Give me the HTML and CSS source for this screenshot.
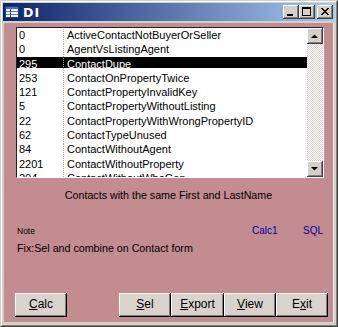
FILE: index.html
```html
<!DOCTYPE html>
<html>
<head>
<meta charset="utf-8">
<link rel="stylesheet" href="styles.css">
</head>
<body>
<div class="window">
  <div class="frame">
    <div class="titlebar">
      <svg class="appicon" width="16" height="14" viewBox="0 0 16 14">
        <rect x="1.5" y="1.5" width="13" height="11" fill="#f4f4ff" stroke="#1c3c8c"/>
        <rect x="2" y="2" width="12" height="2" fill="#4a70c8"/>
        <line x1="6.5" y1="4" x2="6.5" y2="12" stroke="#1c3c8c"/>
        <line x1="2" y1="6.5" x2="14" y2="6.5" stroke="#5a78c0"/>
        <line x1="2" y1="9.5" x2="14" y2="9.5" stroke="#5a78c0"/>
      </svg>
      <span class="title">DI</span>
      <div class="capbtns">
        <div class="capbtn"><svg width="16" height="14" viewBox="0 0 16 14"><rect x="4" y="9" width="6" height="2" fill="#000"/></svg></div>
        <div class="capbtn"><svg width="16" height="14" viewBox="0 0 16 14"><rect x="3.5" y="2.5" width="8" height="8" fill="none" stroke="#000"/><rect x="3" y="2" width="9" height="2" fill="#000"/></svg></div>
        <div class="capbtn close"><svg width="16" height="14" viewBox="0 0 16 14"><path d="M4 3 L11 10 M5 3 L12 10 M11 3 L4 10 M12 3 L5 10" stroke="#000" stroke-width="1"/></svg></div>
      </div>
    </div>
    <div class="client">
      <div class="listbox">
        <div class="rows">
          <div class="row"><span class="c1">0</span><span class="c2">ActiveContactNotBuyerOrSeller</span></div>
          <div class="row"><span class="c1">0</span><span class="c2">AgentVsListingAgent</span></div>
          <div class="row sel"><span class="c1">295</span><span class="c2">ContactDupe</span></div>
          <div class="row"><span class="c1">253</span><span class="c2">ContactOnPropertyTwice</span></div>
          <div class="row"><span class="c1">121</span><span class="c2">ContactPropertyInvalidKey</span></div>
          <div class="row"><span class="c1">5</span><span class="c2">ContactPropertyWithoutListing</span></div>
          <div class="row"><span class="c1">22</span><span class="c2">ContactPropertyWithWrongPropertyID</span></div>
          <div class="row"><span class="c1">62</span><span class="c2">ContactTypeUnused</span></div>
          <div class="row"><span class="c1">84</span><span class="c2">ContactWithoutAgent</span></div>
          <div class="row"><span class="c1">2201</span><span class="c2">ContactWithoutProperty</span></div>
          <div class="row"><span class="c1">204</span><span class="c2">ContactWithoutWhoGen</span></div>
        </div>
        <div class="vscroll">
          <div class="sbtn"><svg width="16" height="16" viewBox="0 0 16 16"><path d="M4 10 L11 10 L7.5 6.5 Z" fill="#000"/></svg></div>
          <div class="track"></div>
          <div class="sbtn"><svg width="16" height="16" viewBox="0 0 16 16"><path d="M4 6 L11 6 L7.5 9.5 Z" fill="#000"/></svg></div>
        </div>
      </div>
      <div class="caption">Contacts with the same First and LastName</div>
      <div class="inforow">
        <span class="note">Note</span>
        <span class="link calc1">Calc1</span>
        <span class="link">SQL</span>
      </div>
      <div class="fix">Fix:Sel and combine on Contact form</div>
      <div class="buttons">
        <div class="btn calc"><span class="u">C</span>alc</div>
        <div class="btn"><span class="u">S</span>el</div>
        <div class="btn wide"><span class="u">E</span>xport</div>
        <div class="btn"><span class="u">V</span>iew</div>
        <div class="btn">E<span class="u">x</span>it</div>
      </div>
    </div>
  </div>
</div>
</body>
</html>
```

FILE: styles.css
```css
html, body {
  margin: 0;
  padding: 0;
  background: #d4d0c8;
}
body {
  font-family: "Liberation Sans", Arial, sans-serif;
}
.window {
  width: 338px;
  height: 327px;
  box-sizing: border-box;
  border: 1px solid;
  border-color: #d4d0c8 #404040 #404040 #d4d0c8;
  background: #d4d0c8;
}
.frame {
  height: 100%;
  box-sizing: border-box;
  border: 1px solid;
  border-color: #ffffff #808080 #808080 #ffffff;
  padding: 1px;
  display: flex;
  flex-direction: column;
}
.titlebar {
  height: 18px;
  flex: none;
  display: flex;
  align-items: center;
  background: linear-gradient(to right, #0a246a, #a6caf0);
  padding-left: 1px;
  padding-right: 2px;
}
.appicon {
  display: block;
  flex: none;
}
.title {
  margin-left: 3px;
  color: #fff;
  font-family: "DejaVu Sans", sans-serif;
  font-weight: bold;
  font-size: 12.5px;
  letter-spacing: 1px;
}
.capbtns {
  margin-left: auto;
  display: flex;
}
.capbtn {
  width: 16px;
  height: 14px;
  box-sizing: border-box;
  background: #d4d0c8;
  box-shadow: inset -1px -1px 0 #404040, inset 1px 1px 0 #ffffff, inset -2px -2px 0 #808080;
}
.capbtn svg { display: block; }
.capbtn.close { margin-left: 2px; }
.client {
  flex: 1;
  margin: 2px 1px 2px 1px;
  background: #c38c91;
  display: flex;
  flex-direction: column;
  border-right: 1px solid #f0f0f0;
}
.listbox {
  margin: 4px 0 0 12px;
  width: 308px;
  height: 151px;
  box-sizing: border-box;
  border: 1px solid;
  border-color: #202020 #ffffff #ffffff #202020;
  background: #fff;
  display: flex;
  overflow: hidden;
}
.rows {
  flex: 1;
  overflow: hidden;
  font-size: 11px;
  color: #000;
}
.row {
  display: flex;
  height: 14.3px;
  box-sizing: border-box;
  padding-top: 1px;
  line-height: 13.3px;
  white-space: nowrap;
}
.c1 {
  width: 44px;
  flex: none;
  padding-left: 2px;
  border-right: 1px dotted #b0b0b0;
}
.c2 {
  padding-left: 3px;
}
.row.sel {
  background: linear-gradient(#000, #000) 0 0 / 100% 11px no-repeat;
  color: #fff;
}
.vscroll {
  width: 16px;
  flex: none;
  display: flex;
  flex-direction: column;
}
.sbtn {
  width: 16px;
  height: 16px;
  flex: none;
  background: #d4d0c8;
  box-shadow: inset -1px -1px 0 #404040, inset 1px 1px 0 #ffffff, inset -2px -2px 0 #808080;
}
.sbtn svg { display: block; }
.track {
  flex: 1;
  background: repeating-conic-gradient(#d4d0c8 0 25%, #ffffff 0 50%) 0 0 / 2px 2px;
}
.caption {
  margin-top: 11px;
  text-align: center;
  font-size: 10.7px;
  line-height: 13px;
  color: #000;
}
.inforow {
  margin-top: 22px;
  display: flex;
  align-items: baseline;
  padding-left: 13px;
  line-height: 13px;
}
.note {
  font-size: 8.5px;
  width: 235px;
}
.link {
  font-size: 10px;
  color: #0000a8;
}
.calc1 {
  width: 51px;
}
.fix {
  margin-top: 4px;
  padding-left: 13px;
  font-size: 10.7px;
  line-height: 13px;
}
.buttons {
  margin-top: auto;
  margin-bottom: 5px;
  padding-left: 11px;
  display: flex;
}
.btn {
  width: 52px;
  height: 24px;
  box-sizing: border-box;
  background: #d8d4cc;
  box-shadow: inset -1px -1px 0 #000000, inset 1px 1px 0 #ffffff, inset -2px -2px 0 #808080;
  font-size: 12px;
  line-height: 23px;
  text-align: center;
  color: #000;
}
.btn.calc {
  margin-right: 52px;
}
.btn.wide {
  width: 53px;
}
.u {
  text-decoration: underline;
}
```
